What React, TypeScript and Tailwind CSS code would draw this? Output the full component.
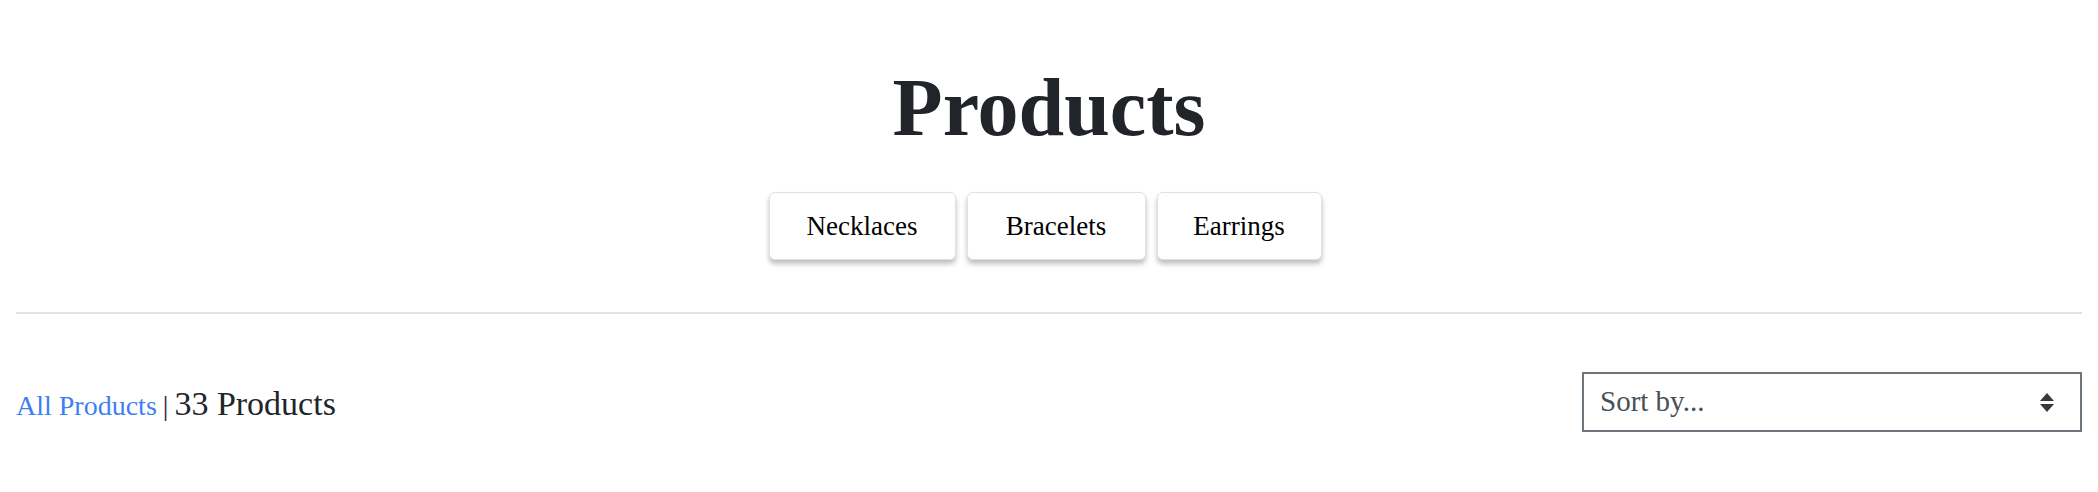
import React from "react";

const serif = { fontFamily: '"Liberation Serif", "Times New Roman", serif' };

function CategoryButton({ label, width }: { label: string; width: string }) {
  return (
    <button
      className={`${width} h-[68px] flex items-center justify-center rounded-[6px] border border-[#dee2e6] bg-white text-[27px] text-black shadow-[0_4px_5px_rgba(0,0,0,0.25)]`}
      style={serif}
    >
      {label}
    </button>
  );
}

export default function App() {
  return (
    <div className="w-full bg-white px-4 pb-[60px]" style={serif}>
      <h1 className="pt-[67px] h-[150px] text-center text-[82px] leading-none font-bold text-[#212529]">
        Products
      </h1>
      <div className="mt-[42px] flex justify-center gap-[11px] pr-[8px]">
        <CategoryButton label="Necklaces" width="w-[187px]" />
        <CategoryButton label="Bracelets" width="w-[179px]" />
        <CategoryButton label="Earrings" width="w-[165px]" />
      </div>
      <hr className="mt-[52px] border-0 h-[2px] bg-[#e3e3e3]" />
      <div className="mt-[58px] flex items-center justify-between">
        <div className="flex items-baseline pt-[4px] text-[#212529]">
          <a href="#" className="text-[28px] text-[#3f7ff0] leading-none">
            All Products
          </a>
          <span className="mx-[6px] text-[28px] leading-none">|</span>
          <span className="text-[34px] leading-none">33 Products</span>
        </div>
        <div className="relative w-[500px] h-[60px]">
          <select
            className="w-full h-full appearance-none border-2 border-[#6c757d] bg-white pl-[16px] text-[29px] text-[#495057] outline-none"
            style={serif}
            defaultValue=""
          >
            <option value="">Sort by...</option>
            <option value="price-asc">Price: Low to High</option>
            <option value="price-desc">Price: High to Low</option>
          </select>
          <svg
            className="pointer-events-none absolute right-[28px] top-[21px]"
            width="14"
            height="19"
            viewBox="0 0 14 19"
          >
            <path d="M7 0 L14 8 L0 8 Z" fill="#343a40" />
            <path d="M0 11 L14 11 L7 19 Z" fill="#343a40" />
          </svg>
        </div>
      </div>
    </div>
  );
}
